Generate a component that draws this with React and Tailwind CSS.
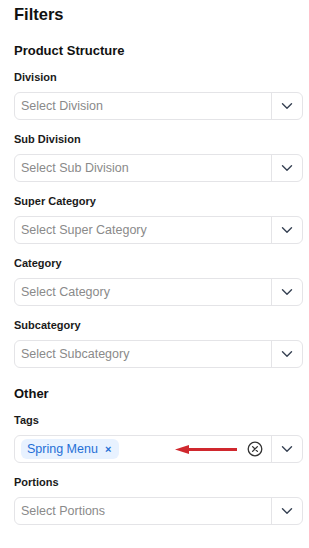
import React from "react";

function Chevron() {
  return (
    <svg width="12" height="8" viewBox="0 0 12 8" fill="none" className="text-gray-700">
      <path d="M1.5 1.8 6 6.2l4.5-4.4" stroke="currentColor" strokeWidth="1.4" strokeLinecap="round" strokeLinejoin="round" />
    </svg>
  );
}

function SelectBox({ placeholder }) {
  return (
    <div className="flex h-[28px] items-stretch rounded-md border border-[#e4e4e7] bg-white">
      <div className="flex flex-1 items-center pl-[6px] text-[12.5px] text-[#8a8a8a]">{placeholder}</div>
      <div className="flex w-[31px] items-center justify-center border-l border-[#e4e4e7]">
        <Chevron />
      </div>
    </div>
  );
}

function Field({ label, placeholder }) {
  return (
    <div className="mb-3">
      <p className="mb-2 h-[14px] text-[11px] font-bold leading-[14px] text-[#1a1a1a]">{label}</p>
      <SelectBox placeholder={placeholder} />
    </div>
  );
}

export default function App() {
  const structure = [
    ["Division", "Select Division"],
    ["Sub Division", "Select Sub Division"],
    ["Super Category", "Select Super Category"],
    ["Category", "Select Category"],
    ["Subcategory", "Select Subcategory"],
  ];

  return (
    <div className="h-[548px] w-[309px] bg-white pl-[14px] pr-[6px] pt-[4px] font-['Liberation_Sans',Arial,sans-serif]">
      <h1 className="h-[20px] text-[16.5px] font-bold leading-[20px] text-[#111]">Filters</h1>
      <h2 className="mt-[18px] h-[18px] text-[13px] font-bold leading-[18px] text-[#111]">Product Structure</h2>
      <div className="mt-[10px]">
        {structure.map(([label, ph]) => (
          <Field key={label} label={label} placeholder={ph} />
        ))}
      </div>

      <h2 className="mt-[17px] h-[18px] text-[13px] font-bold leading-[18px] text-[#111]">Other</h2>
      <div className="mt-[10px]">
        <div className="mb-3">
          <p className="mb-2 h-[14px] text-[11px] font-bold leading-[14px] text-[#1a1a1a]">Tags</p>
          <div className="flex h-[28px] items-stretch rounded-md border border-[#e4e4e7] bg-white">
            <div className="flex flex-1 items-center pl-[6px] pr-[8px]">
              <span className="flex h-[20px] items-center gap-[7px] rounded-md bg-[#e8f2ff] pl-[6px] pr-[8px] text-[12.5px] text-[#1f6fd6]">
                Spring Menu
                <span className="text-[11px] font-bold leading-none">×</span>
              </span>
              <svg width="62" height="11" viewBox="0 0 62 11" className="ml-auto">
                <path d="M62 5.5H12" stroke="#d0282e" strokeWidth="3" />
                <path d="M0 5.5 14 1v9z" fill="#d0282e" />
              </svg>
              <svg width="16" height="16" viewBox="0 0 16 16" fill="none" className="ml-[10px]">
                <circle cx="8" cy="8" r="6.8" stroke="#333" strokeWidth="1.3" />
                <path d="M5.6 5.6l4.8 4.8M10.4 5.6l-4.8 4.8" stroke="#333" strokeWidth="1.3" strokeLinecap="round" />
              </svg>
            </div>
            <div className="flex w-[31px] items-center justify-center border-l border-[#e4e4e7]">
              <Chevron />
            </div>
          </div>
        </div>
        <Field label="Portions" placeholder="Select Portions" />
      </div>
    </div>
  );
}
